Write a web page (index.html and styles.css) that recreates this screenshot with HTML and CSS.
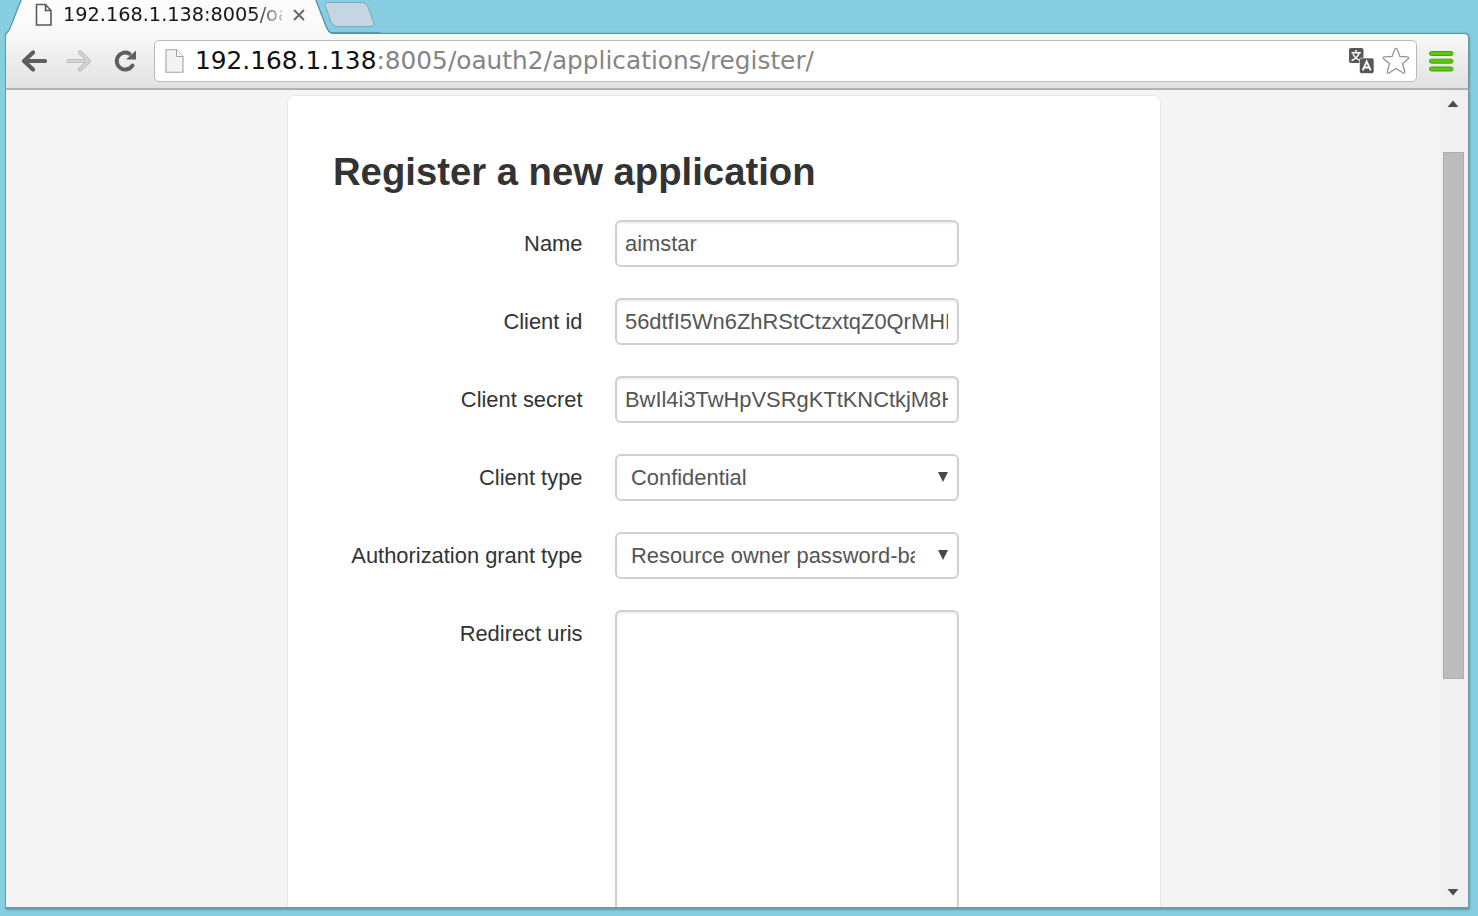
FILE: index.html
```html
<!DOCTYPE html>
<html lang="en">
<head>
<meta charset="utf-8">
<title>Register a new application</title>
<link rel="stylesheet" href="styles.css">
</head>
<body>
<div class="window">
  <header class="tabs">
    <svg class="tab-shape" width="380" height="38" viewBox="0 0 380 38">
      <defs>
        <linearGradient id="tabfill" x1="0" y1="0" x2="0" y2="1"><stop offset="0" stop-color="#fdfdfd"/><stop offset="1" stop-color="#f8f8f8"/></linearGradient>
      </defs>
      <path d="M6 38V34L10 29L22 -1H315L325.500 26Q328.500 33.500 333 34V38Z" fill="url(#tabfill)"/>
      <path d="M5.500 38V34.500L9.500 29.500L21.500 -1" fill="none" stroke="#6299a9" stroke-width="1.300"/>
      <path d="M315.500 -1L326 26Q328.500 32.500 332 33H380" fill="none" stroke="#57909f" stroke-width="1.300"/>
      <path d="M325.500 6Q324 2.500 328 2.500H361Q366 2.500 368 7L373.500 22Q375 26.500 370 26.500H337Q333 26.500 331 22Z" fill="#c3d6e1" stroke="#7ba9bb"/>
    </svg>
    <div class="tab">
      <svg class="tab-page" width="18" height="24" viewBox="0 0 18 24"><path d="M1.500 1.500H10.500L16 7.500V22H1.500ZM10.500 1.500V7.500H16" fill="none" stroke="#5a5a5a" stroke-width="1.600"/></svg>
      <span class="tab-title">192.168.1.138:8005/oa</span>
      <svg class="tab-close" width="12" height="12" viewBox="0 0 12 12"><path d="M1 1L11 11M11 1L1 11" stroke="#666" stroke-width="1.900"/></svg>
    </div>
  </header>
  <nav class="toolbar">
    <svg class="nav-icon back" width="26" height="24" viewBox="0 0 26 24"><path d="M12 3.500L3 12L12 20.500M3 12H24" fill="none" stroke="#5e5e5e" stroke-width="4.200" stroke-linecap="round" stroke-linejoin="round"/></svg>
    <svg class="nav-icon forward" width="26" height="24" viewBox="0 0 26 24"><path d="M14 3.500L23 12L14 20.500M23 12H2.500" fill="none" stroke="#bdbdbd" stroke-width="4.200" stroke-linecap="round" stroke-linejoin="round"/><path d="M14 3.500L23 12L14 20.500M23 12H2.500" fill="none" stroke="#d4d4d4" stroke-width="2.400" stroke-linecap="round" stroke-linejoin="round"/></svg>
    <svg class="nav-icon reload" width="24" height="24" viewBox="0 0 24 24"><path d="M19.500 16.500A8.500 8.500 0 1 1 16.500 4.700" fill="none" stroke="#5e5e5e" stroke-width="4" stroke-linecap="round"/><path d="M23 1.500V10.500H13Z" fill="#5e5e5e"/></svg>
    <div class="address">
      <svg class="page-icon" width="19" height="24" viewBox="0 0 19 24"><path d="M1 .700H11.500L18 7.500V23.200H1Z" fill="#f3f3f5" stroke="#a2a2a2" stroke-width="1.100"/><path d="M11.500 .700V7.500H18" fill="#fff" stroke="#a2a2a2"/></svg>
      <span class="url"><span class="host">192.168.1.138</span><span class="path">:8005/oauth2/applications/register/</span></span>
      <svg class="translate" width="25" height="26" viewBox="0 0 25 26"><rect x="0" y="0" width="14.500" height="15" rx="2" fill="#575757"/><path d="M7 2V4.500M2.500 4.700H11.800M10 5.500Q8 10.500 2.500 12.500M4 6Q6.500 11 11.500 12.500" fill="none" stroke="#fff" stroke-width="1.500"/><rect x="10.500" y="10" width="14.500" height="15.500" rx="2" fill="#575757" stroke="#fff" stroke-width=".6"/><path d="M13.700 22.300L17.700 13.500L21.700 22.300M15 19.500H20.400" fill="none" stroke="#fff" stroke-width="1.800"/></svg>
      <svg class="star" width="28" height="28" viewBox="0 0 28 28"><path d="M14 1.500Q15 1.200 15.500 3L17.900 9.500L25 9.900Q28 10.300 26 12L20.500 16.600L22.700 24Q23.200 26.900 20.800 25.800L14 21.500L7.500 25.800Q5 27 5.500 24L7.500 16.600L1.800 12Q-.100 10.200 3 9.900L10.100 9.500L12.500 3Q13 1.200 14 1.500Z" fill="#fff" stroke="#939393" stroke-width="1.300"/></svg>
    </div>
    <svg class="menu" width="25" height="22" viewBox="0 0 25 22"><g fill="#5ac70b" stroke="#40a608"><rect x=".500" y=".500" width="23.500" height="4" rx="2"/><rect x=".500" y="8.200" width="23.500" height="4" rx="2"/><rect x=".500" y="16" width="23.500" height="4" rx="2"/></g></svg>
  </nav>
  <div class="viewport">
    <main class="card">
      <h1 class="title">Register a new application</h1>
      <form class="form">
        <label class="label" for="name">Name</label>
        <input class="field" id="name" value="aimstar">
        <label class="label" for="cid">Client id</label>
        <input class="field" id="cid" value="56dtfI5Wn6ZhRStCtzxtqZ0QrMHE">
        <label class="label" for="secret">Client secret</label>
        <input class="field" id="secret" value="BwIl4i3TwHpVSRgKTtKNCtkjM8H">
        <span class="label">Client type</span>
        <div class="field select"><span class="choice">Confidential</span><svg class="arrow" width="10" height="10" viewBox="0 0 10 10"><path d="M0 0H10L5 10Z" fill="#484848"/></svg></div>
        <span class="label">Authorization grant type</span>
        <div class="field select"><span class="choice">Resource owner password-ba</span><svg class="arrow" width="10" height="10" viewBox="0 0 10 10"><path d="M0 0H10L5 10Z" fill="#484848"/></svg></div>
        <label class="label" for="uris">Redirect uris</label>
        <textarea class="field area" id="uris"></textarea>
      </form>
    </main>
    <aside class="scrollbar">
      <svg width="12" height="7" viewBox="0 0 12 7"><path d="M.500 7L6 .500L11.500 7Z" fill="#4d4d4d"/></svg>
      <div class="thumb"></div>
      <svg class="down" width="12" height="7" viewBox="0 0 12 7"><path d="M.500 0L6 6.500L11.500 0Z" fill="#4d4d4d"/></svg>
    </aside>
  </div>
</div>
</body>
</html>
```
FILE: styles.css
```css
* { box-sizing: border-box; }
body {
  margin: 0;
  height: 916px;
  overflow: hidden;
  background: #87cee3;
  font-family: "Liberation Sans", Arial, sans-serif;
}
.window {
  position: relative;
  height: 909px;
  width: 1469px;
  display: flex;
  flex-direction: column;
}
.window svg { display: block; flex: none; }
.tabs { height: 33px; flex: none; }
.tab-shape { position: absolute; left: 0; top: 0; z-index: 1; }
.tab {
  position: relative;
  z-index: 2;
  display: flex;
  width: 310px;
  height: 30px;
  padding-left: 35px;
}
.tab-page { margin-top: 3px; }
.tab-title {
  margin: 3px 0 0 10px;
  width: 219px;
  font: 19.300px/23px "DejaVu Sans", sans-serif;
  color: #151515;
  white-space: nowrap;
  overflow: hidden;
  -webkit-mask-image: linear-gradient(90deg, #000 190px, transparent 228px);
  mask-image: linear-gradient(90deg, #000 190px, transparent 228px);
}
.tab-close { margin: 9px 0 0 11px; }
.toolbar {
  height: 57px;
  flex: none;
  margin-left: 5px;
  display: flex;
  align-items: flex-start;
  padding: 7px 14px 0 15px;
  background: linear-gradient(#f8f8f8, #e2e2e2);
  border: 1px solid #6299a9;
  border-top-color: #57909f;
  border-bottom: 2px solid #b3b3b3;
  border-top-right-radius: 5px;
  box-shadow: 1px 0 2px #5d98a8;
}
.nav-icon { margin-top: 8px; }
.forward { margin-left: 19px; }
.reload { margin-left: 21px; }
.address {
  width: 1263px;
  height: 42px;
  margin: -1px 0 0 17px;
  padding: 0 6px 0 10px;
  display: flex;
  align-items: center;
  background: #fff;
  border: 1px solid #b9b9b9;
  border-radius: 5px;
}
.url {
  margin: -1px auto 0 11px;
  font: 24.800px/34px "DejaVu Sans", sans-serif;
  white-space: nowrap;
}
.host { color: #111; }
.path { color: #858585; }
.translate { margin-top: -1px; }
.star { margin-left: 8px; }
.menu { margin: 10px 0 0 12px; }
.viewport {
  flex: 1;
  min-height: 0;
  margin-left: 5px;
  display: flex;
  overflow: hidden;
  background: #f4f4f4;
  border: 1px solid #6b9aa8;
  border-top: 0;
  border-bottom-width: 2px;
  box-shadow: 1px 1px 2px #5d98a8;
}
.card {
  width: 874px;
  height: 830px;
  margin: 5px 0 0 281px;
  padding: 51px 45px 0;
  background: #fff;
  border: 1px solid #e6e6e6;
  border-radius: 7px;
}
.title {
  margin: 0;
  font-size: 38.250px;
  line-height: 50px;
  color: #333;
  white-space: nowrap;
}
.form {
  margin-top: 22.500px;
  display: grid;
  grid-template-columns: 249.500px 344px;
  column-gap: 32.500px;
  row-gap: 31.150px;
}
.label {
  text-align: right;
  font-size: 21.900px;
  line-height: 48px;
  height: 47px;
  color: #333;
  white-space: nowrap;
}
.field {
  width: 344px;
  height: 47px;
  margin: 0;
  padding: 2px 9px 0 8px;
  border: 2px solid #d0d0d0;
  border-radius: 6px;
  background: #fff;
  box-shadow: inset 0 2px 2px rgba(0, 0, 0, .06);
  color: #555;
  font: 21.900px/44px "Liberation Sans", Arial, sans-serif;
  outline: 0;
}
.select {
  display: flex;
  justify-content: space-between;
  padding: 0 9px 0 14px;
  box-shadow: none;
}
.choice { width: 284px; overflow: hidden; white-space: nowrap; }
.arrow { margin-top: 16px; }
.area { height: 400px; resize: none; }
.scrollbar {
  width: 27px;
  margin-left: auto;
  padding: 10px 3px 11px 0;
  display: flex;
  flex-direction: column;
  align-items: center;
  background: #f0f0f0;
}
.thumb {
  width: 21px;
  height: 527px;
  margin-top: 45px;
  background: #bcbcbc;
  border: 1px solid #aeaeae;
}
.down { margin-top: auto; }
```
